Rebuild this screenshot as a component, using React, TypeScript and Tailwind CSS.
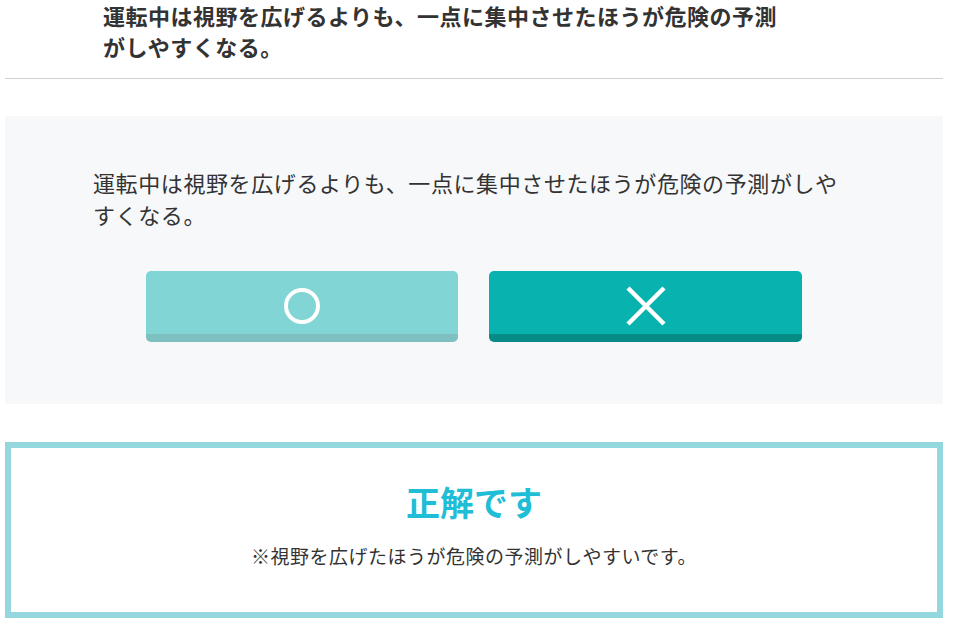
export default function App() {
  const font = { fontFamily: '"Noto Sans CJK JP", "Noto Sans", sans-serif' };
  return (
    <div className="w-[956px] h-[622px] overflow-hidden bg-white text-[#333]" style={font}>
      <div className="mx-[5px] w-[938px]">
        <h2 className="pl-[98px] w-[790px] text-[22px] leading-[31px] font-bold tracking-[0.5px] text-[#333]">
          運転中は視野を広げるよりも、一点に集中させたほうが危険の予測がしやすくなる。
        </h2>
        <div className="mt-[16px] h-px bg-[#cdd1d5]" />
        <div className="mt-[37px] h-[288px] bg-[#f7f8fa] pt-[50px] px-[88px]">
          <p className="w-[748px] text-[22px] leading-[32px] tracking-[0.6px] text-[#333]">
            運転中は視野を広げるよりも、一点に集中させたほうが危険の予測がしやすくなる。
          </p>
          <div className="mt-[41px] flex justify-center gap-[31px] -ml-[88px] -mr-[88px]">
            <button className="w-[312px] h-[71px] rounded-[5px] bg-[#81d5d4] border-b-[8px] border-[#7ec0c0] flex items-center justify-center pt-[6px]">
              <svg width="40" height="40" viewBox="0 0 40 40">
                <circle cx="20" cy="20" r="16" fill="none" stroke="white" strokeWidth="4" />
              </svg>
            </button>
            <button className="w-[313px] h-[71px] rounded-[5px] bg-[#08b2ae] border-b-[8px] border-[#068b87] flex items-center justify-center pt-[6px]">
              <svg width="40" height="40" viewBox="0 0 40 40">
                <path d="M2 2 L38 38 M38 2 L2 38" stroke="white" strokeWidth="4.5" fill="none" />
              </svg>
            </button>
          </div>
        </div>
        <div className="mt-[38px] h-[176px] border-[6px] border-[#94d7df] bg-white pt-[34px] text-center">
          <div className="text-[34px] leading-[40px] font-bold text-[#20bdd6]">正解です</div>
          <div className="mt-[20px] text-[19px] leading-[28px] tracking-[0.5px] text-[#333]">
            ※視野を広げたほうが危険の予測がしやすいです。
          </div>
        </div>
      </div>
    </div>
  );
}
